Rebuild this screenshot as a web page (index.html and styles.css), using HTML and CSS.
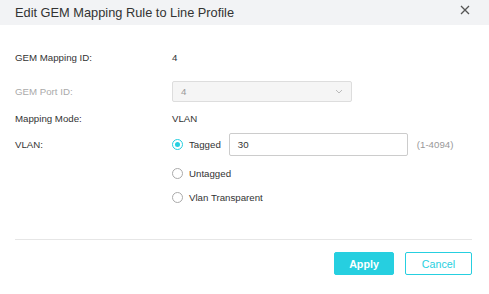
FILE: index.html
```html
<!DOCTYPE html>
<html>
<head>
<meta charset="utf-8">
<link rel="stylesheet" href="styles.css">
</head>
<body>
<div class="dialog">
  <div class="header">
    <span class="title">Edit GEM Mapping Rule to Line Profile</span>
    <svg class="close" width="10" height="10" viewBox="0 0 10 10"><path d="M1 1L9 9M9 1L1 9" stroke="#555" stroke-width="1.3"/></svg>
  </div>
  <div class="form">
    <div class="row r1"><span class="label">GEM Mapping ID:</span><span class="value">4</span></div>
    <div class="row r2"><span class="label disabled">GEM Port ID:</span>
      <div class="select"><span>4</span><svg width="8" height="5" viewBox="0 0 8 5"><path d="M1 1L4 4L7 1" fill="none" stroke="#bbb" stroke-width="1"/></svg></div>
    </div>
    <div class="row r3"><span class="label">Mapping Mode:</span><span class="value">VLAN</span></div>
    <div class="row r4"><span class="label">VLAN:</span>
      <label class="radio"><span class="dot checked"></span>Tagged</label>
      <div class="input">30</div>
      <span class="hint">(1-4094)</span>
    </div>
    <div class="row r5"><span class="label"></span><label class="radio"><span class="dot"></span>Untagged</label></div>
    <div class="row r6"><span class="label"></span><label class="radio"><span class="dot"></span>Vlan Transparent</label></div>
  </div>
  <div class="divider"></div>
  <div class="footer">
    <button class="btn primary">Apply</button>
    <button class="btn secondary">Cancel</button>
  </div>
</div>
</body>
</html>
```
FILE: styles.css
```css
* { box-sizing: border-box; }
html, body { margin: 0; padding: 0; background: #fff; }
body { font-family: "Liberation Sans", Arial, sans-serif; font-size: 9.7px; color: #333; width: 489px; height: 294px; overflow: hidden; }
.header { height: 25px; background: #f2f3f5; display: flex; align-items: center; justify-content: space-between; padding: 0 19px 0 15px; }
.title { font-size: 12.8px; color: #333; }
.close { display: block; margin-top: -5px; }
.form { padding: 0 15px; }
.row { display: flex; align-items: center; }
.label { width: 157px; flex: none; }
.label.disabled { color: #aaa; }
.r1 { margin-top: 22px; height: 20px; }
.r2 { margin-top: 14px; height: 21px; }
.r3 { margin-top: 6px; height: 20px; }
.r4 { margin-top: 5px; height: 23px; }
.r5 { margin-top: 7px; height: 20px; }
.r6 { margin-top: 4px; height: 20px; }
.select { width: 180px; height: 21px; border: 1px solid #ddd; border-radius: 2px; background: #f5f5f5; color: #999; display: flex; align-items: center; justify-content: space-between; padding: 0 8px 0 8px; }
.radio { display: flex; align-items: center; gap: 6px; }
.dot { width: 11px; height: 11px; border: 1px solid #aaa; border-radius: 50%; display: inline-block; position: relative; }
.dot.checked { border-color: #26cfe0; }
.dot.checked::after { content: ""; position: absolute; left: 2px; top: 2px; width: 5px; height: 5px; border-radius: 50%; background: #26cfe0; }
.input { width: 179px; height: 23px; margin-left: 8px; border: 1px solid #ccc; border-radius: 2px; display: flex; align-items: center; padding-left: 8px; color: #333; }
.hint { color: #999; margin-left: 9px; }
.divider { margin: 32px 17px 0 15px; height: 1px; background: #e6e6e6; }
.footer { display: flex; justify-content: flex-end; gap: 11px; padding-right: 17px; margin-top: 12px; }
.btn { height: 23px; border-radius: 2px; font-family: "Liberation Sans", Arial, sans-serif; font-size: 10.7px; font-weight: bold; padding: 0; }
.primary { width: 60px; background: #26cfe0; border: 1px solid #26cfe0; color: #fff; }
.secondary { width: 67px; background: #fff; border: 1px solid #26cfe0; color: #26cfe0; font-weight: normal; }
```
